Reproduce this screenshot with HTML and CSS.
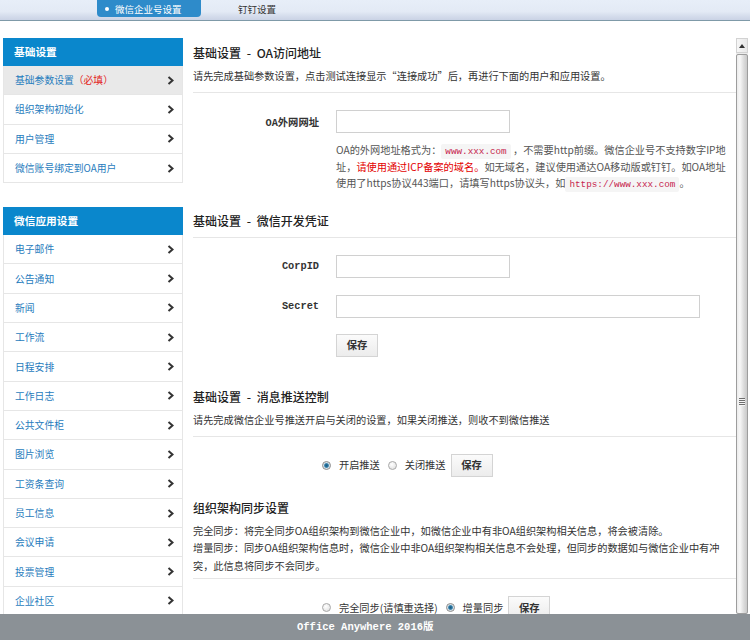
FILE: index.html
```html
<!DOCTYPE html>
<html lang="zh-CN">
<head>
<meta charset="utf-8">
<title>微信企业号设置</title>
<link rel="stylesheet" href="styles.css">
</head>
<body>
<div class="page">
  <header class="tabbar">
    <div class="tab active"><span class="dot"></span>微信企业号设置</div>
    <div class="tab">钉钉设置</div>
  </header>

  <div class="workspace">
    <aside class="sidebar">
      <div class="group">
        <div class="group-head">基础设置</div>
        <div class="item current"><span>基础参数设置<em class="req">（必填）</em></span><svg class="chev" viewBox="0 0 7 9"><path d="M1.5 1 L5.5 4.5 L1.5 8"/></svg></div>
        <div class="item"><span>组织架构初始化</span><svg class="chev" viewBox="0 0 7 9"><path d="M1.5 1 L5.5 4.5 L1.5 8"/></svg></div>
        <div class="item"><span>用户管理</span><svg class="chev" viewBox="0 0 7 9"><path d="M1.5 1 L5.5 4.5 L1.5 8"/></svg></div>
        <div class="item"><span>微信账号绑定到OA用户</span><svg class="chev" viewBox="0 0 7 9"><path d="M1.5 1 L5.5 4.5 L1.5 8"/></svg></div>
      </div>
      <div class="group">
        <div class="group-head">微信应用设置</div>
        <div class="item"><span>电子邮件</span><svg class="chev" viewBox="0 0 7 9"><path d="M1.5 1 L5.5 4.5 L1.5 8"/></svg></div>
        <div class="item"><span>公告通知</span><svg class="chev" viewBox="0 0 7 9"><path d="M1.5 1 L5.5 4.5 L1.5 8"/></svg></div>
        <div class="item"><span>新闻</span><svg class="chev" viewBox="0 0 7 9"><path d="M1.5 1 L5.5 4.5 L1.5 8"/></svg></div>
        <div class="item"><span>工作流</span><svg class="chev" viewBox="0 0 7 9"><path d="M1.5 1 L5.5 4.5 L1.5 8"/></svg></div>
        <div class="item"><span>日程安排</span><svg class="chev" viewBox="0 0 7 9"><path d="M1.5 1 L5.5 4.5 L1.5 8"/></svg></div>
        <div class="item"><span>工作日志</span><svg class="chev" viewBox="0 0 7 9"><path d="M1.5 1 L5.5 4.5 L1.5 8"/></svg></div>
        <div class="item"><span>公共文件柜</span><svg class="chev" viewBox="0 0 7 9"><path d="M1.5 1 L5.5 4.5 L1.5 8"/></svg></div>
        <div class="item"><span>图片浏览</span><svg class="chev" viewBox="0 0 7 9"><path d="M1.5 1 L5.5 4.5 L1.5 8"/></svg></div>
        <div class="item"><span>工资条查询</span><svg class="chev" viewBox="0 0 7 9"><path d="M1.5 1 L5.5 4.5 L1.5 8"/></svg></div>
        <div class="item"><span>员工信息</span><svg class="chev" viewBox="0 0 7 9"><path d="M1.5 1 L5.5 4.5 L1.5 8"/></svg></div>
        <div class="item"><span>会议申请</span><svg class="chev" viewBox="0 0 7 9"><path d="M1.5 1 L5.5 4.5 L1.5 8"/></svg></div>
        <div class="item"><span>投票管理</span><svg class="chev" viewBox="0 0 7 9"><path d="M1.5 1 L5.5 4.5 L1.5 8"/></svg></div>
        <div class="item"><span>企业社区</span><svg class="chev" viewBox="0 0 7 9"><path d="M1.5 1 L5.5 4.5 L1.5 8"/></svg></div>
      </div>
    </aside>

    <main class="content">
      <section class="sec">
        <div class="sec-head">
          <h2 class="sec-title">基础设置 - OA访问地址</h2>
          <p class="sec-desc">请先完成基础参数设置，点击测试连接显示“连接成功”后，再进行下面的用户和应用设置。</p>
        </div>
        <div class="sec-body">
          <div class="row">
            <label class="lbl">OA外网网址</label>
            <input class="txt short" type="text">
          </div>
          <div class="help">OA的外网地址格式为：<span class="code">www.xxx.com</span> ，不需要http前缀。微信企业号不支持数字IP地<br>址，<span class="warn">请使用通过ICP备案的域名。</span>如无域名，建议使用通达OA移动版或钉钉。如OA地址<br>使用了https协议443端口，请填写https协议头，如<span class="code">https://www.xxx.com</span>。</div>
        </div>
      </section>

      <section class="sec sec-cred">
        <div class="sec-head plain">
          <h2 class="sec-title">基础设置 - 微信开发凭证</h2>
        </div>
        <div class="sec-body">
          <div class="row">
            <label class="lbl">CorpID</label>
            <input class="txt short" type="text">
          </div>
          <div class="row">
            <label class="lbl">Secret</label>
            <input class="txt long" type="text">
          </div>
          <div class="row btn-row">
            <span class="lbl"></span>
            <button class="btn" type="button">保存</button>
          </div>
        </div>
      </section>

      <section class="sec sec-push">
        <div class="sec-head">
          <h2 class="sec-title">基础设置 - 消息推送控制</h2>
          <p class="sec-desc">请先完成微信企业号推送开启与关闭的设置，如果关闭推送，则收不到微信推送</p>
        </div>
        <div class="sec-body">
          <div class="radio-row">
            <span class="radio on"></span><span class="opt">开启推送</span>
            <span class="radio"></span><span class="opt last">关闭推送</span>
            <button class="btn" type="button">保存</button>
          </div>
        </div>
      </section>

      <section class="sec sec-sync">
        <div class="sec-head tight">
          <h2 class="sec-title">组织架构同步设置</h2>
          <p class="sec-desc lines">完全同步：将完全同步OA组织架构到微信企业中，如微信企业中有非OA组织架构相关信息，将会被清除。<br>增量同步：同步OA组织架构信息时，微信企业中非OA组织架构相关信息不会处理，但同步的数据如与微信企业中有冲<br>突，此信息将同步不会同步。</p>
        </div>
        <div class="sec-body">
          <div class="radio-row">
            <span class="radio"></span><span class="opt">完全同步(请慎重选择)</span>
            <span class="radio on"></span><span class="opt last">增量同步</span>
            <button class="btn" type="button">保存</button>
          </div>
        </div>
      </section>
    </main>

    <div class="vscroll">
      <div class="sb-up"></div>
      <div class="sb-thumb"><div class="sb-grip"></div></div>
    </div>
  </div>

  <footer class="footer">Office Anywhere 2016版</footer>
</div>
</body>
</html>
```

FILE: styles.css
```css
* { box-sizing: border-box; }
html, body { margin: 0; padding: 0; }
body {
  width: 750px;
  height: 640px;
  overflow: hidden;
  background: #fff;
  font-family: "Noto Sans CJK SC", "Noto Sans", sans-serif;
  font-size: 10.2px;
  color: #333;
}
.page { display: flex; flex-direction: column; height: 640px; }

/* top tab bar */
.tabbar {
  flex: none;
  height: 21px;
  display: flex;
  align-items: flex-start;
  padding-left: 97px;
  background: linear-gradient(#e7eef8 0%, #e3eaf5 58%, #d5ddec 80%, #cad3e5 100%);
  border-bottom: 1px solid #7f9aa8;
}
.tab {
  height: 17px;
  display: flex;
  align-items: center;
  font-size: 9.5px;
  color: #333;
}
.tab.active {
  width: 104px;
  padding-left: 8px;
  background: #2e8bca;
  color: #fff;
  border-radius: 0 0 4px 4px;
}
.tab .dot {
  width: 4px;
  height: 4px;
  border-radius: 50%;
  background: #fff;
  margin-right: 6px;
}
.tab + .tab { margin-left: 37px; }

/* workspace */
.workspace {
  flex: 1;
  min-height: 0;
  display: flex;
  padding-top: 17px;
  overflow: hidden;
}

/* sidebar */
.sidebar { flex: none; width: 180px; margin-left: 3px; }
.group + .group { margin-top: 24px; }
.group-head {
  height: 28px;
  line-height: 28px;
  padding-left: 11px;
  background: #0a87cc;
  color: #fff;
  font-weight: bold;
  font-size: 10.7px;
}
.item {
  display: flex;
  align-items: center;
  justify-content: space-between;
  height: 29.3px;
  padding: 0 8px 0 11px;
  border: 1px solid #e6e6e6;
  border-top: none;
  color: #1f7cbd;
  font-size: 9.8px;
}
.item.current { background: #e9e9e9; }
.req { color: #e3231b; font-style: normal; }
.chev { width: 7px; height: 9px; flex: none; }
.chev path { fill: none; stroke: #333; stroke-width: 2; }

/* main content */
.content {
  flex: 1;
  min-width: 0;
  margin-left: 3px;
  padding: 4px 0 0 7px;
  overflow: hidden;
}
.sec-head { padding-bottom: 8px; border-bottom: 1px solid #e6e6e6; }
.sec-head.plain { padding-bottom: 5px; }
.sec-head.tight { padding-bottom: 4px; }
.sec-title {
  margin: 0;
  font-size: 12px;
  line-height: 22px;
  font-weight: 500;
  word-spacing: 3px;
  color: #222;
}
.sec-desc { margin: 3px 0 0; line-height: 17px; color: #333; }
.sec-desc.lines { white-space: nowrap; line-height: 17.4px; }
.sec-body { padding-top: 17px; }

.sec-cred { margin-top: 18px; }
.sec-push { margin-top: 29px; }
.sec-sync { margin-top: 20px; }

.row { display: flex; align-items: center; height: 23px; }
.row + .row { margin-top: 17px; }
.row.btn-row { margin-top: 16px; }
.lbl {
  flex: none;
  width: 126px;
  margin-right: 17px;
  text-align: right;
  font-family: "Liberation Mono", "Noto Sans CJK SC", monospace;
  font-weight: bold;
  font-size: 10.3px;
  color: #333;
}
.txt {
  height: 23px;
  border: 1px solid #d0d0d0;
  background: #fff;
  padding: 0 4px;
  font: inherit;
  margin: 0;
}
.txt.short { width: 174px; }
.txt.long { width: 364px; }
.btn {
  height: 23px;
  width: 42px;
  margin: 0;
  padding: 0;
  border: 1px solid #d4d4d4;
  background: linear-gradient(#fbfbfb, #ececec);
  font-family: "Noto Sans CJK SC", sans-serif;
  font-size: 10.3px;
  line-height: 12px;
  font-weight: bold;
  color: #333;
}

.help {
  margin: 9px 0 0 143px;
  line-height: 16.6px;
  color: #555;
  white-space: nowrap;
}
.code {
  font-family: "Liberation Mono", monospace;
  font-size: 9.3px;
  line-height: 10px;
  color: #c7254e;
  background: #f5f5f5;
  padding: 2px 4px;
  border-radius: 2px;
}
.warn { color: #e30000; }

.radio-row {
  display: flex;
  align-items: center;
  height: 23px;
  padding-left: 129px;
  line-height: 12px;
}
.radio {
  flex: none;
  width: 9px;
  height: 9px;
  border-radius: 50%;
  border: 1px solid #a8a8a8;
  background: radial-gradient(circle at 40% 35%, #ffffff, #dcdcdc);
  margin-right: 8px;
}
.radio.on {
  border-color: #8a8a8a;
  background: radial-gradient(circle at 50% 50%, #1c5a80 0, #2a78a4 1.8px, #c9dbe6 2.8px, #f1f1f1 3.6px);
}
.opt { margin-right: 8px; color: #333; }
.opt.last { margin-right: 5px; }

/* fake classic scrollbar */
.vscroll {
  flex: none;
  width: 12px;
  margin-right: 2px;
  display: flex;
  flex-direction: column;
  background: #ececec;
}
.sb-up {
  flex: none;
  height: 15px;
  background: linear-gradient(90deg, #f6f6f6, #e8e8e8);
  border: 1px solid #d2d2d2;
  display: flex;
  align-items: center;
  justify-content: center;
}
.sb-up::before {
  content: "";
  border-left: 3px solid transparent;
  border-right: 3px solid transparent;
  border-bottom: 4px solid #333;
}
.sb-thumb {
  flex: 1;
  margin-top: 1px;
  border: 1px solid #9d9d9d;
  border-radius: 2px;
  background: linear-gradient(90deg, #ececec 0%, #f7f7f7 30%, #dadada 70%, #cacaca 100%);
  padding-top: 343px;
  display: flex;
  justify-content: center;
}
.sb-grip {
  width: 6px;
  height: 8px;
  background: repeating-linear-gradient(#6e6e6e 0 1px, #f5f5f5 1px 2px);
}

/* footer */
.footer {
  flex: none;
  height: 26px;
  line-height: 26px;
  padding-left: 297px;
  background: #8b9196;
  color: #fff;
  font-family: "Liberation Mono", "Noto Sans CJK SC", monospace;
  font-weight: bold;
  font-size: 10.5px;
}
```
